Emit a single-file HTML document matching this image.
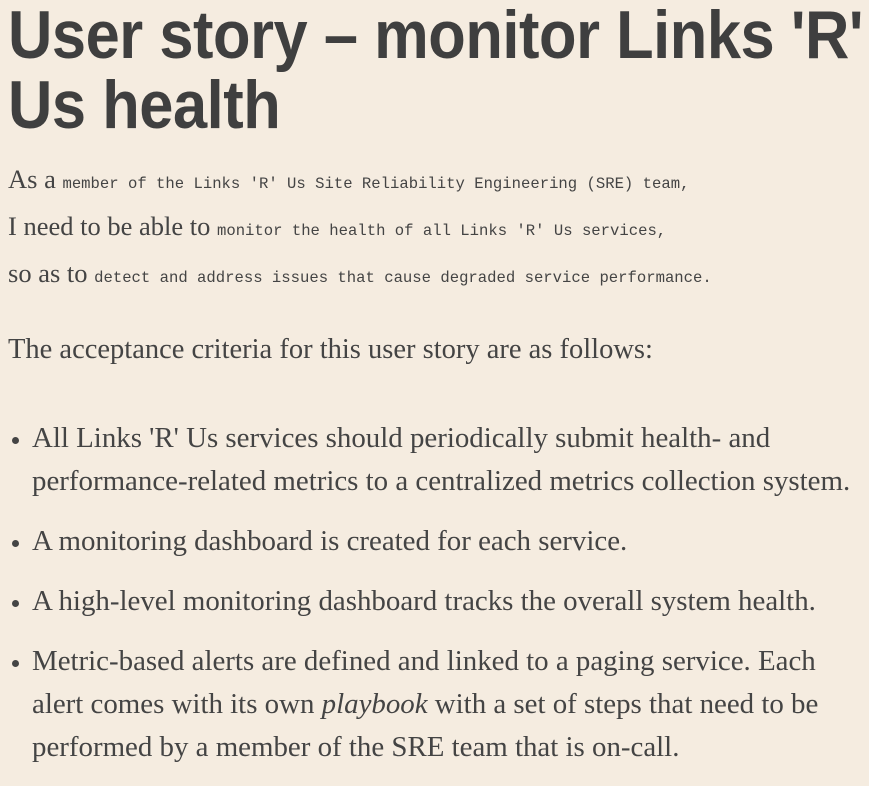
<!DOCTYPE html>
<html><head><meta charset="utf-8"><style>
html,body{margin:0;padding:0;background:#f5ece0;width:869px;height:773px;overflow:hidden}
body{color:#444;font-family:"Liberation Serif",serif;}
h1{margin:0;position:absolute;left:8px;top:0;font-family:"Liberation Sans",sans-serif;font-weight:bold;font-size:68px;line-height:70px;color:#3f3f3f;transform:scaleX(0.903);transform-origin:left top;white-space:nowrap;letter-spacing:-0.5px}
.s{position:absolute;left:8px;font-size:26.5px;white-space:nowrap}
.s code{font-family:"Liberation Mono",monospace;font-size:15.6px}
.a{font-size:28.5px}
ul{position:absolute;left:0;top:417px;margin:0;padding:0 0 0 32px;width:860px;font-size:28.9px;line-height:43px;white-space:nowrap}
li{margin-bottom:17px}
li::marker{font-size:22px}
</style></head><body>
<h1>User story – monitor Links 'R'<br>Us health</h1>
<div class="s" style="top:164px">As a <code>member of the Links 'R' Us Site Reliability Engineering (SRE) team,</code></div>
<div class="s" style="top:211px">I need to be able to <code>monitor the health of all Links 'R' Us services,</code></div>
<div class="s" style="top:258px">so as to <code>detect and address issues that cause degraded service performance.</code></div>
<div class="s a" style="top:334px">The acceptance criteria for this user story are as follows:</div>
<ul>
<li>All Links 'R' Us services should periodically submit health- and<br>performance-related metrics to a centralized metrics collection system.</li>
<li>A monitoring dashboard is created for each service.</li>
<li>A high-level monitoring dashboard tracks the overall system health.</li>
<li>Metric-based alerts are defined and linked to a paging service. Each<br>alert comes with its own <i>playbook</i> with a set of steps that need to be<br>performed by a member of the SRE team that is on-call.</li>
</ul>
</body></html>
